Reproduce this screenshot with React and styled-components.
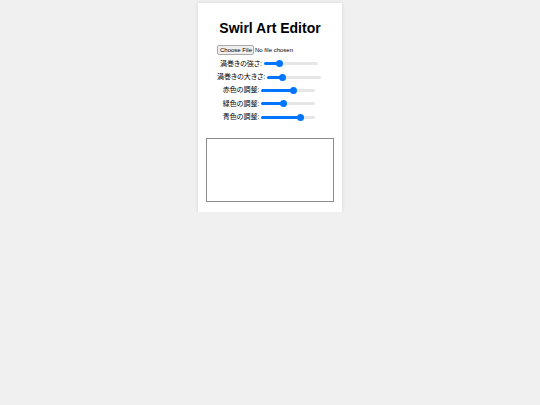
import React, { useState } from 'react';
import styled, { createGlobalStyle } from 'styled-components';

const GlobalStyle = createGlobalStyle`
  body {
    margin: 0;
    background: #f0f0f0;
    font-family: "Liberation Sans", "Noto Sans CJK JP", sans-serif;
  }
`;

const Page = styled.main`
  display: flex;
  justify-content: center;
  padding-top: 3px;
`;

const Card = styled.section`
  display: flex;
  flex-direction: column;
  align-items: center;
  box-sizing: border-box;
  padding: 8px 8px 10px;
  background: white;
  box-shadow: 0 0 4px rgba(0, 0, 0, .1);
`;

const Title = styled.h1`
  margin: 9px 0;
  font-size: 14px;
  line-height: 16px;
  color: black;
`;

const FileInput = styled.input`
  width: 106px;
  height: 10px;
  font-family: inherit;
  font-size: 6px;
  line-height: 8px;
  color: black;

  &::file-selector-button {
    box-sizing: border-box;
    height: 10px;
    margin: 0 1px 0 0;
    padding: 0 1px 0 2px;
    border: 1px solid #a8a8a8;
    border-radius: 2px;
    background: #efefef;
    color: black;
    font: inherit;
  }
`;

const Controls = styled.div`
  display: grid;
  grid-auto-rows: 1fr;
  height: 67px;
  margin-top: 2px;
`;

const Row = styled.div`
  display: flex;
  align-items: center;
  justify-content: center;
  gap: 2px;
`;

const Label = styled.label`
  font-size: 7px;
  line-height: 10px;
  font-feature-settings: "palt";
  color: black;
`;

const Slider = styled.input`
  appearance: none;
  width: 54px;
  height: 7px;
  margin: 0 2px 0 0;
  background: transparent;

  &::-webkit-slider-runnable-track {
    box-sizing: border-box;
    height: 3px;
    border-radius: 2px;
    background: linear-gradient(
      to right,
      #0075ff ${(props) => props.$fill}%,
      #e6e6e6 ${(props) => props.$fill}%
    );
  }

  &::-webkit-slider-thumb {
    appearance: none;
    width: 7px;
    height: 7px;
    margin-top: -2px;
    border-radius: 50%;
    background: #0075ff;
  }
`;

const Canvas = styled.canvas`
  box-sizing: border-box;
  width: 128px;
  height: 64px;
  margin-top: 14px;
  border: 1px solid #8c8c8c;
`;

const sliders = [
  { id: 'strength', label: '渦巻きの強さ:', value: 25 },
  { id: 'size', label: '渦巻きの大きさ:', value: 25 },
  { id: 'red', label: '赤色の調整:', value: 60 },
  { id: 'green', label: '緑色の調整:', value: 40 },
  { id: 'blue', label: '青色の調整:', value: 75 },
];

const SliderRow = ({ id, label, value }) => {
  const [current, setCurrent] = useState(value);

  return (
    <Row>
      <Label htmlFor={id}>{label}</Label>
      <Slider
        id={id}
        type="range"
        min="0"
        max="100"
        value={current}
        $fill={current}
        onChange={(e) => setCurrent(Number(e.target.value))}
      />
    </Row>
  );
};

const App = () => {
  return (
    <>
      <GlobalStyle />
      <Page>
        <Card>
          <Title>Swirl Art Editor</Title>
          <FileInput type="file" accept="image/*" aria-label="Image" />
          <Controls>
            {sliders.map((slider) => (
              <SliderRow key={slider.id} {...slider} />
            ))}
          </Controls>
          <Canvas />
        </Card>
      </Page>
    </>
  );
};

export default App;
